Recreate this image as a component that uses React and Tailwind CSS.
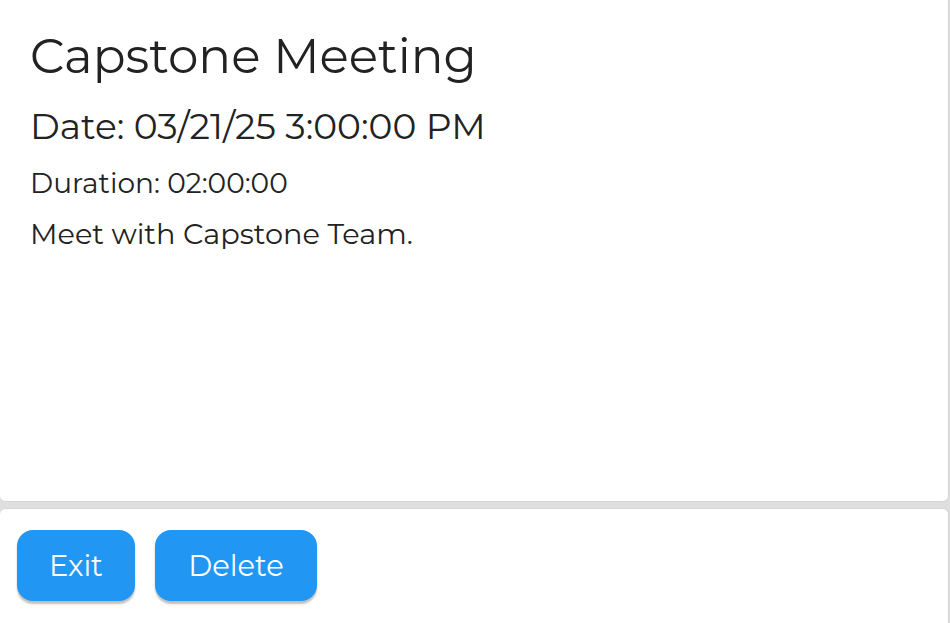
import React from 'react';

const event = {
  title: 'Capstone Meeting',
  date: '03/21/25 3:00:00 PM',
  duration: '02:00:00',
  notes: 'Meet with Capstone Team.',
};

const App = () => {
  return (
    <div className="h-[623px] overflow-hidden bg-[#dfdfdf] pr-[1px] font-['Montserrat','Open_Sans',sans-serif] text-[#222]">
      <div className="h-[502px] rounded-b-md border border-t-0 border-l-0 border-[#d4d4d4] bg-white px-[30px] pt-[32px]">
        <h1 className="text-[48.5px] leading-none">{event.title}</h1>
        <p className="mt-[27px] text-[36px] leading-none">Date: {event.date}</p>
        <p className="mt-[25px] text-[28px] leading-none">Duration: {event.duration}</p>
        <p className="mt-[23px] text-[28.8px] leading-none">{event.notes}</p>
      </div>
      <div className="mt-[6px] h-[130px] rounded-md border border-l-0 border-[#d4d4d4] bg-white px-[17px] pt-[21px]">
        <div className="flex gap-[20px]">
          <button className="h-[71px] w-[118px] rounded-[16px] bg-[#2196f3] text-[29px] text-white shadow-[0_3px_2px_rgba(0,0,0,0.25)]">
            Exit
          </button>
          <button className="h-[71px] w-[162px] rounded-[16px] bg-[#2196f3] text-[29px] text-white shadow-[0_3px_2px_rgba(0,0,0,0.25)]">
            Delete
          </button>
        </div>
      </div>
    </div>
  );
};

export default App;
